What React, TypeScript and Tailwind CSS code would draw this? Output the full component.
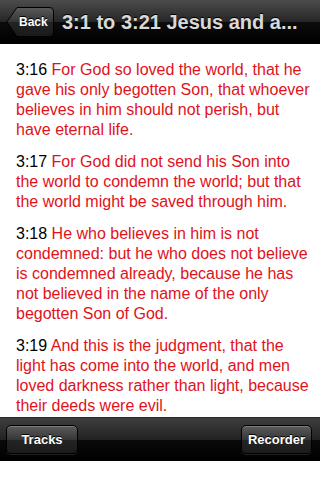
import React from "react";

const FONT = { fontFamily: '"Liberation Sans", Arial, Helvetica, sans-serif' };

const verses = [
    {
        n: "3:16",
        text: "For God so loved the world, that he gave his only begotten Son, that whoever believes in him should not perish, but have eternal life.",
    },
    {
        n: "3:17",
        text: "For God did not send his Son into the world to condemn the world; but that the world might be saved through him.",
    },
    {
        n: "3:18",
        text: "He who believes in him is not condemned: but he who does not believe is condemned already, because he has not believed in the name of the only begotten Son of God.",
    },
    {
        n: "3:19",
        text: "And this is the judgment, that the light has come into the world, and men loved darkness rather than light, because their deeds were evil.",
    },
];

// Glossy dark bar button, as on the old iPhone black toolbars.
function BarButton({ label, width }: { label: string; width: string }) {
    return (
        <button
            className={`
                ${width}
                h-[29px]
                rounded-[5px]
                border
                border-black
                bg-[linear-gradient(#5c5c5c,#363636_50%,#242424_51%,#1c1c1c)]
                text-[13px]
                font-bold
                text-white
                shadow-[inset_0_1px_0_rgba(255,255,255,0.2),0_1px_0_rgba(255,255,255,0.12)]
                [text-shadow:0_-1px_0_#000]
            `}
        >
            {label}
        </button>
    );
}

export default function App() {
    return (
        <div className="h-[480px] w-[320px] overflow-hidden bg-white" style={FONT}>

            {/* Navigation bar */}

            <header
                className="
                    flex
                    h-11
                    items-center
                    gap-2
                    border-b
                    border-black
                    bg-[linear-gradient(#4c4c4c,#262626_50%,#0c0c0c_51%,#000)]
                    pl-[6px]
                "
            >
                <div className="relative flex h-[30px] w-[48px] shrink-0 items-center">
                    <svg className="absolute inset-0" width="48" height="30" viewBox="0 0 48 30">
                        <defs>
                            <linearGradient id="bk" x1="0" y1="0" x2="0" y2="1">
                                <stop offset="0" stopColor="#5a5a5a" />
                                <stop offset="0.5" stopColor="#343434" />
                                <stop offset="0.51" stopColor="#232323" />
                                <stop offset="1" stopColor="#1a1a1a" />
                            </linearGradient>
                        </defs>
                        <path
                            d="M11 0.5 H43 Q47.5 0.5 47.5 5 V25 Q47.5 29.5 43 29.5 H11 L0.8 15 Z"
                            fill="url(#bk)"
                            stroke="#000"
                            strokeWidth="1"
                        />
                    </svg>
                    <span className="relative pl-[13px] text-[12px] font-bold text-white [text-shadow:0_-1px_0_#000]">
                        Back
                    </span>
                </div>

                <h1 className="whitespace-nowrap text-[20px] font-bold text-[#d9d9d9] [text-shadow:0_-1px_0_#000]">
                    3:1 to 3:21 Jesus and a...
                </h1>
            </header>

            {/* Passage */}

            <main className="h-[373px] overflow-hidden pl-4 pr-2 pt-4">
                {verses.map((v) => (
                    <p key={v.n} className="mb-3 text-[16px] leading-5">
                        <span className="text-black">{v.n}</span>{" "}
                        <span className="text-[#e0121b]">{v.text}</span>
                    </p>
                ))}
            </main>

            {/* Toolbar */}

            <footer
                className="
                    flex
                    h-11
                    items-center
                    justify-between
                    border-t
                    border-[#2a2a2a]
                    bg-[linear-gradient(#3e3e3e,#222_50%,#0a0a0a_51%,#000)]
                    pl-[6px]
                    pr-2
                "
            >
                <BarButton label="Tracks" width="w-[72px]" />
                <BarButton label="Recorder" width="w-[71px]" />
            </footer>

        </div>
    );
}
